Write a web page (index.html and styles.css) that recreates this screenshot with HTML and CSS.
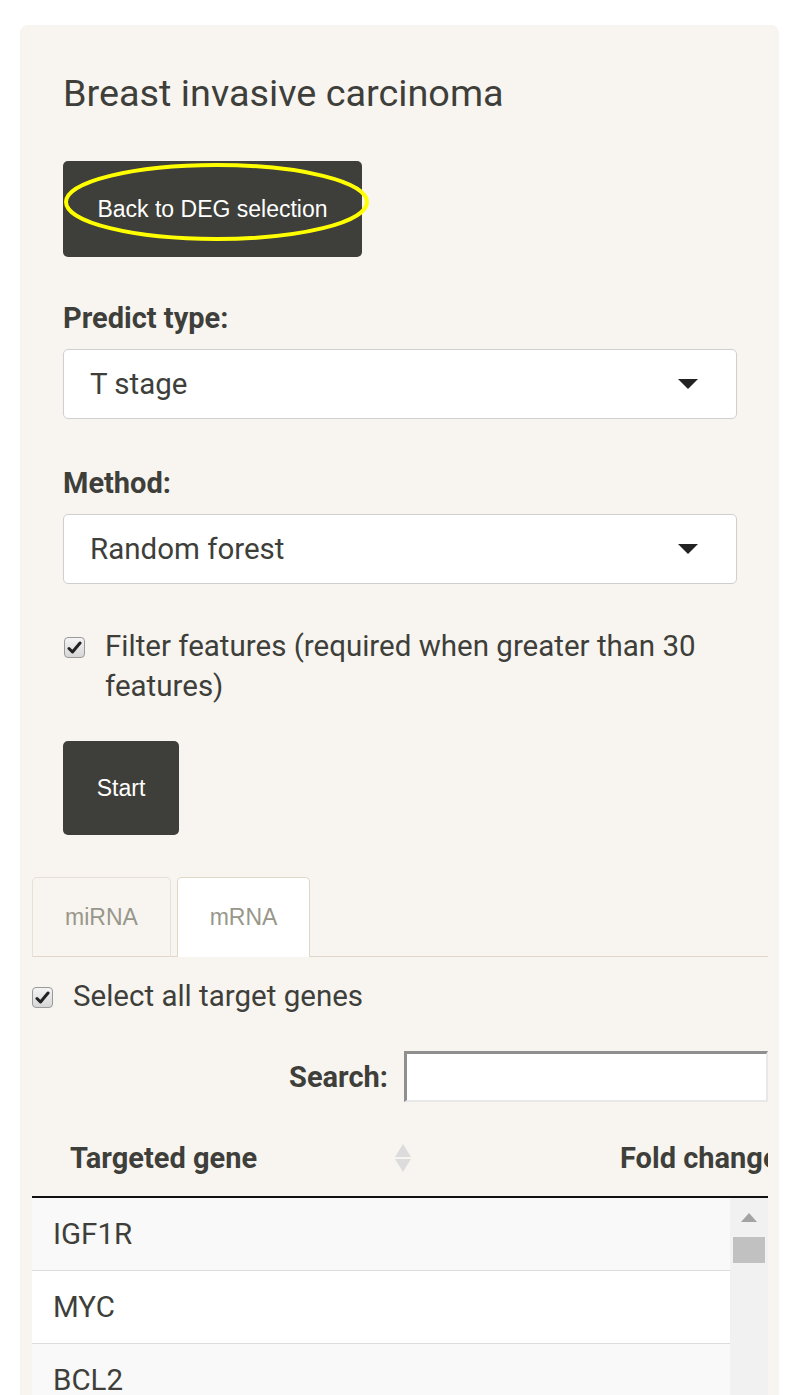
FILE: index.html
```html
<!DOCTYPE html>
<html>
<head>
<meta charset="utf-8">
<link rel="stylesheet" href="styles.css">
</head>
<body>
<div class="panel">
  <div class="form">
    <h1 class="title">Breast invasive carcinoma</h1>
    <div class="btn-wrap">
      <button class="btn btn-back">Back to DEG selection</button>
      <svg class="highlight" width="307" height="80" viewBox="0 0 307 80"><ellipse cx="153.5" cy="40" rx="150.5" ry="37" fill="none" stroke="#ffff00" stroke-width="4"/></svg>
    </div>
    <label class="field-label">Predict type:</label>
    <div class="select"><span>T stage</span><span class="caret"></span></div>
    <label class="field-label">Method:</label>
    <div class="select"><span>Random forest</span><span class="caret"></span></div>
    <div class="check-row filter">
      <span class="checkbox"><svg width="15" height="13" viewBox="0 0 15 13"><path d="M2 7.5 L5.5 11 L13 2" fill="none" stroke="#222" stroke-width="3" stroke-linecap="round" stroke-linejoin="round"/></svg></span>
      <span class="check-text">Filter features (required when greater than 30 features)</span>
    </div>
    <button class="btn btn-start">Start</button>
  </div>

  <div class="tabs">
    <div class="tab">miRNA</div>
    <div class="tab active">mRNA</div>
  </div>

  <div class="check-row select-all">
    <span class="checkbox"><svg width="15" height="13" viewBox="0 0 15 13"><path d="M2 7.5 L5.5 11 L13 2" fill="none" stroke="#222" stroke-width="3" stroke-linecap="round" stroke-linejoin="round"/></svg></span>
    <span class="check-text">Select all target genes</span>
  </div>

  <div class="search-row">
    <span class="search-label">Search:</span>
    <span class="search-input"></span>
  </div>

  <div class="table">
    <div class="thead">
      <div class="th th-gene">Targeted gene<span class="sort"><span class="up"></span><span class="down"></span></span></div>
      <div class="th th-fold">Fold change</div>
    </div>
    <div class="tbody">
      <div class="rows">
        <div class="row odd">IGF1R</div>
        <div class="row">MYC</div>
        <div class="row odd">BCL2</div>
      </div>
      <div class="scrollbar">
        <span class="sb-arrow"></span>
        <span class="sb-thumb"></span>
      </div>
    </div>
  </div>
</div>
</body>
</html>
```

FILE: styles.css
```css
html, body {
  margin: 0;
  padding: 0;
  background: #ffffff;
}
body {
  font-family: Roboto, "Liberation Sans", sans-serif;
  color: #3e3f3a;
  overflow: hidden;
  height: 1395px;
}
.panel {
  margin: 25px 0 0 20px;
  width: 759px;
  box-sizing: border-box;
  height: 1420px;
  background: #f8f5f0;
  border-radius: 8px;
  padding: 0 11px 0 12px;
  overflow: hidden;
}
.form {
  padding: 48px 31px 0 31px;
}
.title {
  margin: 0;
  font-weight: 400;
  font-size: 37.8px;
  line-height: 40px;
  color: #3e3f3a;
}
.btn-wrap {
  position: relative;
  margin-top: 48px;
  width: 299px;
  height: 96px;
}
.btn {
  display: block;
  border: none;
  background: #3e3f3a;
  color: #ffffff;
  font-family: "Liberation Sans", Arial, sans-serif;
  font-size: 23px;
  border-radius: 5px;
  padding: 0;
}
.btn-back {
  width: 299px;
  height: 96px;
}
.highlight {
  position: absolute;
  left: 0;
  top: 1px;
}
.field-label {
  display: block;
  font-weight: 700;
  font-size: 29px;
  line-height: 32px;
  margin-top: 45px;
  margin-bottom: 15px;
}
.select + .field-label {
  margin-top: 48px;
}
.select {
  box-sizing: border-box;
  height: 70px;
  background: #ffffff;
  border: 1px solid #cfcfcf;
  border-radius: 5px;
  display: flex;
  align-items: center;
  justify-content: space-between;
  padding: 0 38px 0 26px;
  font-size: 29.5px;
  color: #3e3f3a;
}
.caret {
  width: 0;
  height: 0;
  border-left: 10px solid transparent;
  border-right: 10px solid transparent;
  border-top: 10px solid #222;
}
.check-row {
  display: flex;
  align-items: flex-start;
  font-size: 29.5px;
  line-height: 40px;
}
.check-row.filter {
  margin-top: 42px;
}
.checkbox {
  flex: none;
  box-sizing: border-box;
  width: 21px;
  height: 21px;
  margin-top: 11px;
  border: 1px solid #9a9a9a;
  border-radius: 4px;
  background: linear-gradient(#f4f4f4, #d6d6d6);
  display: flex;
  align-items: center;
  justify-content: center;
}
.checkbox svg {
  display: block;
}
.filter .checkbox {
  margin-left: 1px;
  margin-right: 20px;
}
.check-text {
  color: #3e3f3a;
}
.btn-start {
  margin-top: 35px;
  width: 116px;
  height: 94px;
}
.tabs {
  margin-top: 42px;
  display: flex;
  gap: 6px;
  border-bottom: 1px solid #dfd7ca;
}
.tab {
  box-sizing: border-box;
  height: 80px;
  margin-bottom: -1px;
  border: 1px solid #e6e0d6;
  border-bottom: none;
  border-radius: 5px 5px 0 0;
  font-family: "Liberation Sans", Arial, sans-serif;
  font-size: 23px;
  color: #98978b;
  display: flex;
  align-items: center;
  justify-content: center;
  width: 139px;
}
.tab.active {
  width: 133px;
  background: #ffffff;
  border-color: #dfd7ca;
}
.check-row.select-all {
  margin-top: 19px;
}
.select-all .checkbox {
  margin-right: 20px;
}
.search-row {
  margin-top: 35px;
  display: flex;
  justify-content: flex-end;
  align-items: center;
  gap: 16px;
}
.search-label {
  font-weight: 700;
  font-size: 29px;
}
.search-input {
  box-sizing: border-box;
  width: 364px;
  height: 51px;
  background: #ffffff;
  border-top: 3px solid #8f8f8f;
  border-left: 3px solid #8f8f8f;
  border-right: 2px solid #e8e8e8;
  border-bottom: 2px solid #e8e8e8;
}
.table {
  margin-top: 18px;
  overflow: hidden;
}
.thead {
  display: flex;
  height: 76px;
  align-items: center;
  border-bottom: 2px solid #111;
  white-space: nowrap;
}
.th {
  font-weight: 700;
  font-size: 29px;
}
.th-gene {
  flex: none;
  width: 388px;
  box-sizing: border-box;
  padding-left: 38px;
  position: relative;
}
.sort {
  position: absolute;
  left: 363px;
  top: 50%;
  transform: translateY(-50%);
  display: flex;
  flex-direction: column;
  gap: 2px;
}
.sort .up {
  width: 0;
  height: 0;
  border-left: 8px solid transparent;
  border-right: 8px solid transparent;
  border-bottom: 13px solid #dcdcdc;
}
.sort .down {
  width: 0;
  height: 0;
  border-left: 8px solid transparent;
  border-right: 8px solid transparent;
  border-top: 13px solid #dcdcdc;
}
.th-fold {
  padding-left: 200px;
}
.tbody {
  display: flex;
}
.rows {
  flex: 1;
}
.row {
  height: 72px;
  border-bottom: 1px solid #dddddd;
  background: #ffffff;
  display: flex;
  align-items: center;
  padding-left: 21px;
  font-size: 29.5px;
  color: #3e3f3a;
}
.row.odd {
  background: #f9f9f9;
}
.scrollbar {
  flex: none;
  width: 38px;
  background: #f1f1f1;
  display: flex;
  flex-direction: column;
  align-items: center;
}
.sb-arrow {
  margin-top: 15px;
  width: 0;
  height: 0;
  border-left: 8px solid transparent;
  border-right: 8px solid transparent;
  border-bottom: 9px solid #a3a3a3;
}
.sb-thumb {
  margin-top: 15px;
  width: 32px;
  height: 26px;
  background: #c1c1c1;
}
```
